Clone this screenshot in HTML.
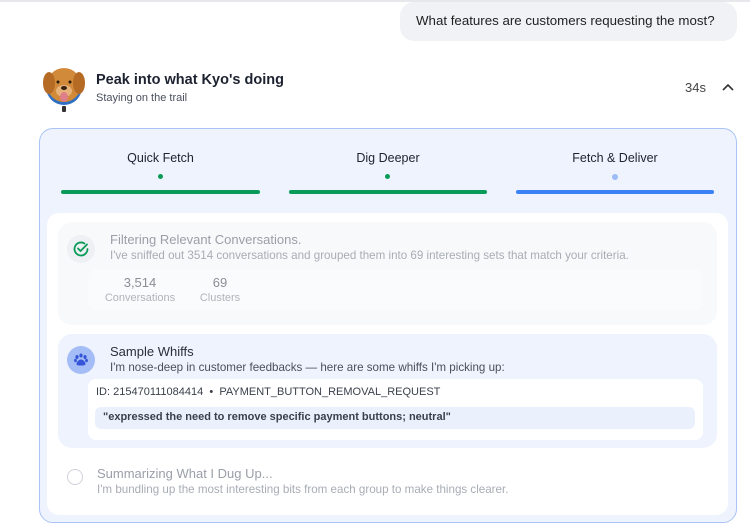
<!DOCTYPE html>
<html><head><style>
*{margin:0;padding:0;box-sizing:border-box}
body{width:750px;height:532px;background:#fff;font-family:"Liberation Sans",sans-serif;position:relative;overflow:hidden;color:#1f2430}
.a{position:absolute;white-space:nowrap}
</style></head><body>
<div class="a" style="left:0;top:0;width:750px;height:2px;background:#e6e8ec"></div>
<div class="a" style="left:400px;top:2px;width:337px;height:39px;background:#f1f2f5;border-radius:14px"></div>
<div class="a" style="left:416px;top:13px;font-size:13.3px;color:#222">What features are customers requesting the most?</div>

<svg class="a" style="left:42px;top:66px" width="44" height="48" viewBox="0 0 44 48">
<circle cx="22" cy="21" r="18" fill="#2d6fc0"/>
<ellipse cx="22" cy="19" rx="17" ry="17" fill="#d08a3a"/>
<ellipse cx="7" cy="17" rx="6" ry="11" fill="#b66b25"/>
<ellipse cx="37" cy="17" rx="6" ry="11" fill="#b66b25"/>
<ellipse cx="22" cy="25" rx="8" ry="6" fill="#e6b27a"/>
<ellipse cx="22" cy="31" rx="4" ry="5" fill="#e07d8a"/>
<circle cx="16" cy="16" r="1.5" fill="#2a1a0a"/><circle cx="28" cy="16" r="1.5" fill="#2a1a0a"/>
<ellipse cx="22" cy="22" rx="3" ry="2" fill="#3a2210"/>
<rect x="20" y="40" width="4" height="6" rx="1" fill="#333"/>
</svg>
<div class="a" style="left:96px;top:72px;font-size:14.5px;font-weight:600;color:#1d2230">Peak into what Kyo's doing</div>
<div class="a" style="left:96px;top:92px;font-size:11px;color:#4a4f5c">Staying on the trail</div>
<div class="a" style="left:685px;top:80px;font-size:13px;color:#444">34s</div>
<svg class="a" style="left:721px;top:82px" width="14" height="10" viewBox="0 0 14 10"><path d="M2 8 L7 3 L12 8" stroke="#333" stroke-width="1.6" fill="none"/></svg>

<div class="a" style="left:39px;top:128px;width:698px;height:395px;background:#eef3fe;border:1px solid #a9c4f5;border-radius:14px"></div>
<div class="a" style="left:61px;top:151px;width:199px;text-align:center;font-size:12.5px;color:#1d2230">Quick Fetch</div>
<div class="a" style="left:289px;top:151px;width:198px;text-align:center;font-size:12.5px;color:#1d2230">Dig Deeper</div>
<div class="a" style="left:516px;top:151px;width:198px;text-align:center;font-size:12.5px;color:#1d2230">Fetch &amp; Deliver</div>
<div class="a" style="left:158px;top:174px;width:5px;height:5px;border-radius:50%;background:#0a9b59"></div>
<div class="a" style="left:385px;top:174px;width:5px;height:5px;border-radius:50%;background:#0a9b59"></div>
<div class="a" style="left:612px;top:174px;width:6px;height:6px;border-radius:50%;background:#9dbcf5"></div>
<div class="a" style="left:61px;top:190px;width:199px;height:4px;border-radius:2px;background:#0a9b59"></div>
<div class="a" style="left:289px;top:190px;width:198px;height:4px;border-radius:2px;background:#0a9b59"></div>
<div class="a" style="left:516px;top:190px;width:198px;height:4px;border-radius:2px;background:#3b82f6"></div>

<div class="a" style="left:47px;top:213px;width:681px;height:302px;background:#fff;border-radius:12px"></div>

<div class="a" style="left:58px;top:222px;width:659px;height:103px;background:#f8f9fb;border-radius:14px"></div>
<div class="a" style="left:67px;top:235px;width:28px;height:28px;border-radius:50%;background:#eef0f3"></div>
<svg class="a" style="left:72px;top:240px" width="18" height="18" viewBox="0 0 18 18"><path d="M15.5 9A6.5 6.5 0 1 1 12.5 3.5" stroke="#0a9b59" stroke-width="1.8" fill="none" stroke-linecap="round"/><path d="M6 8.5 L8.5 11 L15 4.5" stroke="#0a9b59" stroke-width="1.8" fill="none" stroke-linecap="round"/></svg>
<div class="a" style="left:110px;top:232px;font-size:13px;color:#9a9ea8">Filtering Relevant Conversations.</div>
<div class="a" style="left:110px;top:249px;font-size:11.6px;color:#a8acb4">I've sniffed out 3514 conversations and grouped them into 69 interesting sets that match your criteria.</div>
<div class="a" style="left:88px;top:269px;width:615px;height:42px;background:#fafbfc;border-radius:10px"></div>
<div class="a" style="left:100px;top:275px;width:80px;text-align:center;font-size:13px;color:#8a8e97">3,514</div>
<div class="a" style="left:100px;top:292px;width:80px;text-align:center;font-size:11px;color:#b0b3ba">Conversations</div>
<div class="a" style="left:198px;top:275px;width:44px;text-align:center;font-size:13px;color:#8a8e97">69</div>
<div class="a" style="left:198px;top:292px;width:44px;text-align:center;font-size:11px;color:#b0b3ba">Clusters</div>

<div class="a" style="left:58px;top:334px;width:659px;height:114px;background:#eef3fd;border-radius:14px"></div>
<div class="a" style="left:67px;top:346px;width:28px;height:28px;border-radius:50%;background:#a4bdf6"></div>
<svg class="a" style="left:72px;top:351px" width="18" height="18" viewBox="0 0 18 18" fill="#3554d8"><ellipse cx="5" cy="6" rx="1.6" ry="2"/><ellipse cx="9" cy="4.5" rx="1.6" ry="2"/><ellipse cx="13" cy="6" rx="1.6" ry="2"/><ellipse cx="3.5" cy="9.5" rx="1.4" ry="1.8"/><ellipse cx="14.5" cy="9.5" rx="1.4" ry="1.8"/><path d="M9 8.5c2.5 0 4.5 3 4.5 4.5S11 14.5 9 14.5 4.5 14.5 4.5 13 6.5 8.5 9 8.5z"/></svg>
<div class="a" style="left:110px;top:344px;font-size:13px;color:#2a2f3a">Sample Whiffs</div>
<div class="a" style="left:110px;top:361px;font-size:11.6px;color:#4a4f5c">I'm nose-deep in customer feedbacks — here are some whiffs I'm picking up:</div>
<div class="a" style="left:88px;top:379px;width:615px;height:61px;background:#fff;border-radius:8px"></div>
<div class="a" style="left:96px;top:386px;font-size:11px;color:#3a3f4a">ID: 215470111084414 &nbsp;•&nbsp; PAYMENT_BUTTON_REMOVAL_REQUEST</div>
<div class="a" style="left:95px;top:407px;width:600px;height:22px;background:#eaf1fd;border-radius:6px"></div>
<div class="a" style="left:103px;top:411px;font-size:11px;font-weight:bold;color:#3a3f4a">"expressed the need to remove specific payment buttons; neutral"</div>

<div class="a" style="left:67px;top:469px;width:16px;height:16px;border-radius:50%;border:1px solid #cfd2d8;background:#fff"></div>
<div class="a" style="left:97px;top:466px;font-size:13px;color:#9a9ea8">Summarizing What I Dug Up...</div>
<div class="a" style="left:97px;top:483px;font-size:11.6px;color:#a8acb4">I'm bundling up the most interesting bits from each group to make things clearer.</div>
</body></html>
